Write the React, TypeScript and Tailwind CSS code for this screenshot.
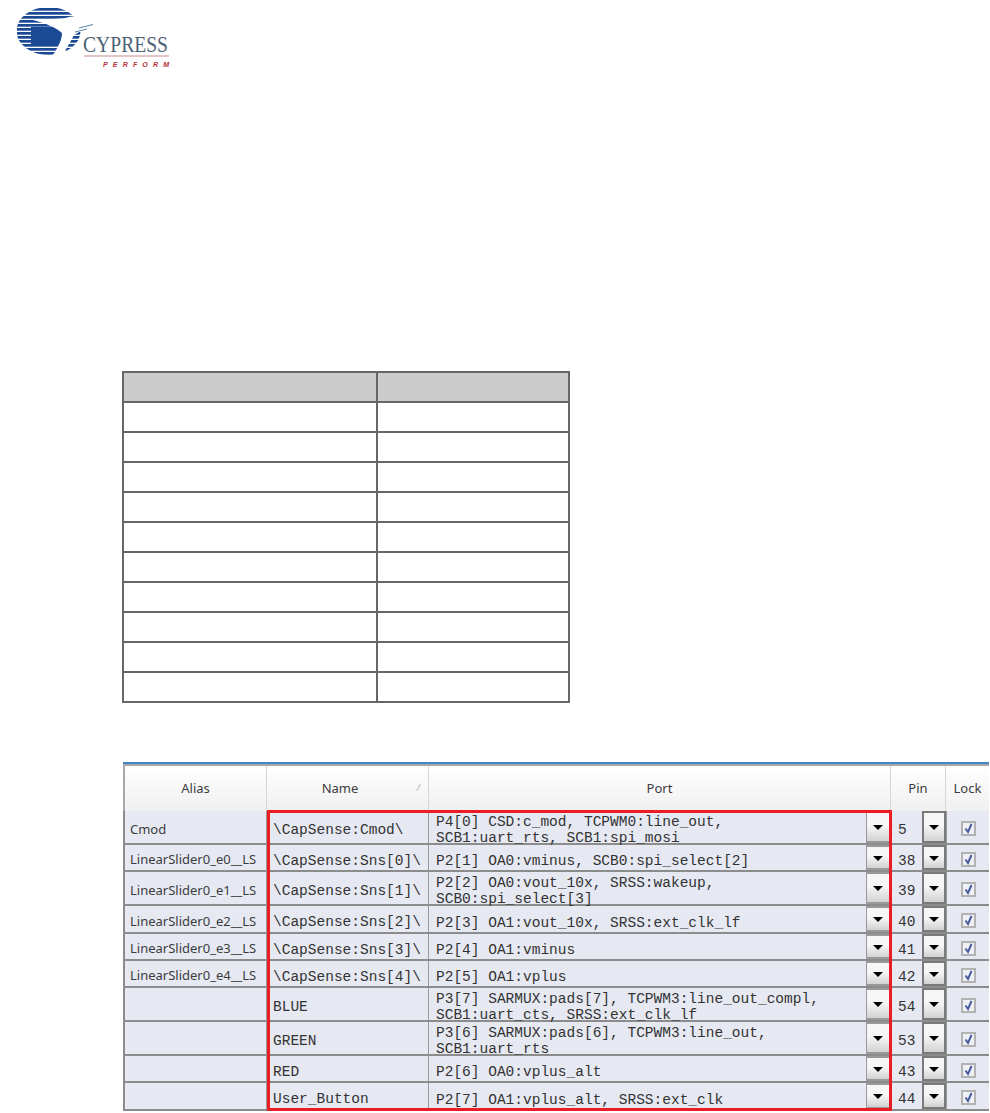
import React from "react"

type PinRow = {
  alias: string
  name: string
  port: string[]
  pin: string
  height: string
}

const rows: PinRow[] = [
  { alias: "Cmod", name: "\\CapSense:Cmod\\", port: ["P4[0] CSD:c_mod, TCPWM0:line_out,", "SCB1:uart_rts, SCB1:spi_mosi"], pin: "5", height: "h-[34px]" },
  { alias: "LinearSlider0_e0__LS", name: "\\CapSense:Sns[0]\\", port: ["P2[1] OA0:vminus, SCB0:spi_select[2]"], pin: "38", height: "h-[27px]" },
  { alias: "LinearSlider0_e1__LS", name: "\\CapSense:Sns[1]\\", port: ["P2[2] OA0:vout_10x, SRSS:wakeup,", "SCB0:spi_select[3]"], pin: "39", height: "h-[34px]" },
  { alias: "LinearSlider0_e2__LS", name: "\\CapSense:Sns[2]\\", port: ["P2[3] OA1:vout_10x, SRSS:ext_clk_lf"], pin: "40", height: "h-[28px]" },
  { alias: "LinearSlider0_e3__LS", name: "\\CapSense:Sns[3]\\", port: ["P2[4] OA1:vminus"], pin: "41", height: "h-[27px]" },
  { alias: "LinearSlider0_e4__LS", name: "\\CapSense:Sns[4]\\", port: ["P2[5] OA1:vplus"], pin: "42", height: "h-[27px]" },
  { alias: "", name: "BLUE", port: ["P3[7] SARMUX:pads[7], TCPWM3:line_out_compl,", "SCB1:uart_cts, SRSS:ext_clk_lf"], pin: "54", height: "h-[34px]" },
  { alias: "", name: "GREEN", port: ["P3[6] SARMUX:pads[6], TCPWM3:line_out,", "SCB1:uart_rts"], pin: "53", height: "h-[34px]" },
  { alias: "", name: "RED", port: ["P2[6] OA0:vplus_alt"], pin: "43", height: "h-[27px]" },
  { alias: "", name: "User_Button", port: ["P2[7] OA1:vplus_alt, SRSS:ext_clk"], pin: "44", height: "h-[28px]" },
]

const mono = "font-['Liberation_Mono',monospace] text-[14.5px] leading-[16px] text-[#333333]"
const ui = "font-['Noto_Sans',sans-serif] text-[13px] text-[#3c3c3c]"

function CypressLogo() {
  const stripes = [3, 7, 11, 15, 19, 23, 27, 31, 35, 39, 43, 47]
  return (
    <svg width="190" height="66" viewBox="0 0 190 66" className="block">
      <defs>
        <clipPath id="globe">
          <ellipse cx="31.5" cy="26" rx="32" ry="24" />
        </clipPath>
      </defs>
      <g clipPath="url(#globe)">
        {stripes.map((y) => (
          <rect key={y} x="-2" y={y} width="68" height="2.7" fill="#1a4a94" />
        ))}
        <rect x="14" y="22" width="34" height="17" fill="#1a4a94" />
      </g>
      {/* bird and trunk */}
      <path
        d="M16 15 C30 13 42 15 52 12 C58 10 66 12 72 14 L83 16.5 L74 19 L76 22 L64 26 L57 30 C54 36 50 42 46 50 L36 50 C41 42 45 35 45 28 C38 22 28 18 16 15 Z"
        fill="#ffffff"
      />
      <path d="M62 23 L76 19.5 M58 27 L70 24" stroke="#5d7fa8" strokeWidth="1" />
      <text x="66" y="46.7" textLength="85" lengthAdjust="spacingAndGlyphs" className="font-['Liberation_Serif',serif] text-[23px]" fill="#4d6277">
        CYPRESS
      </text>
      <rect x="67" y="50.5" width="85" height="1" fill="#c98a8e" />
      <text x="86" y="61.7" textLength="66" className="font-['Liberation_Sans',sans-serif] text-[7px] font-bold italic" fill="#b5303a">
        PERFORM
      </text>
    </svg>
  )
}

function DropButton({ dark }: { dark?: boolean }) {
  const edge = dark ? "border-x-2 border-y-2 border-[#7a7a7a]" : "border-x border-y-2 border-[#999999]"
  return (
    <div className={`flex items-center justify-center w-[24px] h-full pt-[1px] bg-gradient-to-b from-[#f6f6f6] from-45% to-[#d2d2d2] ${edge}`}>
      <div className="w-0 h-0 border-x-[5px] border-x-transparent border-t-[5px] border-t-black" />
    </div>
  )
}

function LockBox() {
  return (
    <div className="flex items-center justify-center w-[15px] h-[15px] border-2 border-[#b2b2b2] bg-[#eef0f6]">
      <svg width="11" height="11" viewBox="0 0 11 11">
        <path d="M2.5 5.5 L5 9 L8.5 1" fill="none" stroke="#4a5c9c" strokeWidth="2" />
      </svg>
    </div>
  )
}

function PinTable() {
  return (
    <div className="relative w-[866px] border-t-2 border-[#3f86c8]">
      <div className="flex h-[47px] border-l-2 border-t-2 border-[#a8a8a8] bg-gradient-to-b from-white to-[#f0f0f0]">
        <div className={`w-[142px] flex items-center justify-center border-r border-[#d6d6d6] ${ui}`}>Alias</div>
        <div className={`relative w-[162px] flex items-center justify-center pr-[15px] border-r border-[#d6d6d6] ${ui}`}>
          Name
          <span className="absolute right-[8px] top-[15px] text-[9px] italic text-[#b0b0b0]">/</span>
        </div>
        <div className={`w-[462px] flex items-center justify-center border-r border-[#d6d6d6] ${ui}`}>Port</div>
        <div className={`w-[55px] flex items-center justify-center border-r border-[#d6d6d6] ${ui}`}>Pin</div>
        <div className={`w-[43px] flex items-center justify-center ${ui}`}>Lock</div>
      </div>
      {rows.map((row) => (
        <div key={row.pin} className={`flex ${row.height} border-l-2 border-b-2 border-[#8c8c8c] bg-[#e6e9f2]`}>
          <div className={`w-[142px] flex items-center pl-[5px] pt-[5px] border-r border-[#9a9a9a] ${ui}`}>{row.alias}</div>
          <div className={`w-[162px] flex items-center pl-[6px] pt-[6px] border-r border-[#9a9a9a] whitespace-pre ${mono}`}>{row.name}</div>
          <div className={`w-[437px] flex items-center pl-[7px] whitespace-pre ${row.port.length > 1 ? "pt-[5px]" : "pt-[7px]"}`}>
            <div className={mono}>
              {row.port.map((line) => (
                <div key={line}>{line}</div>
              ))}
            </div>
          </div>
          <DropButton />
          <div className={`w-[31px] ml-[1px] flex items-center pl-[7px] pt-[6px] ${mono}`}>{row.pin}</div>
          <DropButton dark />
          <div className="w-[43px] flex items-center justify-center pt-[3px] border-l border-[#9a9a9a]">
            <LockBox />
          </div>
        </div>
      ))}
      {/* red highlight over Name and Port */}
      <div className="absolute left-[144px] top-[46px] w-[625px] h-[301px] border-[3px] border-[#ed1c24] pointer-events-none" />
    </div>
  )
}

export default function App() {
  return (
    <div className="w-[990px] h-[1113px] overflow-hidden bg-white">
      <div className="pl-[17px] pt-[5px]">
        <CypressLogo />
      </div>
      <table className="ml-[122px] mt-[300px] w-[448px] table-fixed border-collapse">
        <tbody>
          <tr className="h-[30px] bg-[#cccccc]">
            <td className="w-[254px] border-2 border-[#666666]" />
            <td className="border-2 border-[#666666]" />
          </tr>
          {Array.from({ length: 10 }).map((_, i) => (
            <tr key={i} className="h-[30px]">
              <td className="border-2 border-[#666666]" />
              <td className="border-2 border-[#666666]" />
            </tr>
          ))}
        </tbody>
      </table>
      <div className="ml-[123px] mt-[59px]">
        <PinTable />
      </div>
    </div>
  )
}
